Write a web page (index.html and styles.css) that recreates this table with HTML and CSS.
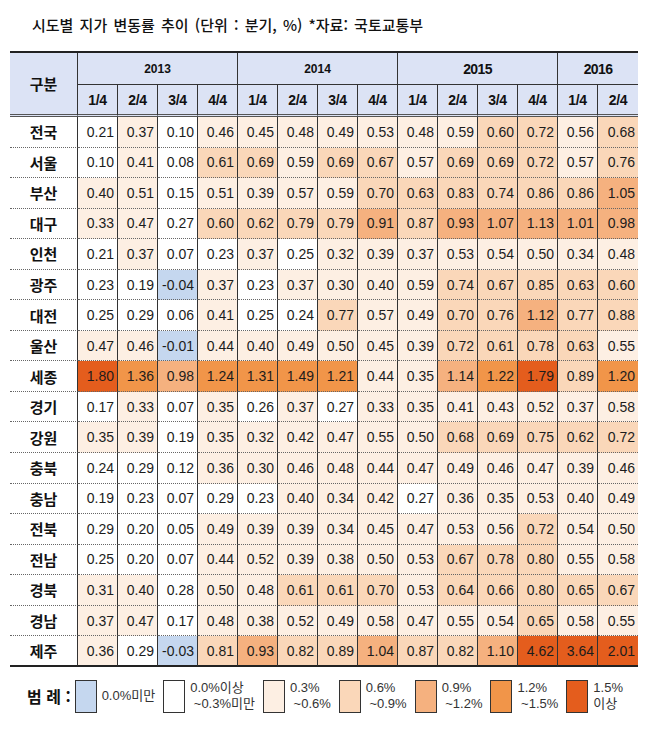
FILE: index.html
```html
<!DOCTYPE html>
<html lang="ko">
<head>
<meta charset="utf-8">
<title>시도별 지가 변동률 추이</title>
<link rel="stylesheet" href="styles.css">
</head>
<body>
<div class="page">
  <div class="title-bar">
    <h1 class="title">시도별 지가 변동률 추이 (단위 : 분기, %) *자료: 국토교통부</h1>
  </div>
  <table class="grid">
    <colgroup><col class="col-name"><col span="14" class="col-q"></colgroup>
    <thead>
      <tr class="yr-row">
        <th rowspan="2" class="hd-name">구분</th>
        <th colspan="4" class="yr yr-s">2013</th>
        <th colspan="4" class="yr yr-s">2014</th>
        <th colspan="4" class="yr yr-l">2015</th>
        <th colspan="2" class="yr yr-l">2016</th>
      </tr>
      <tr class="q-row">
        <th>1/4</th><th>2/4</th><th>3/4</th><th>4/4</th>
        <th>1/4</th><th>2/4</th><th>3/4</th><th>4/4</th>
        <th>1/4</th><th>2/4</th><th>3/4</th><th>4/4</th>
        <th>1/4</th><th>2/4</th>
      </tr>
    </thead>
    <tbody>
      <tr><th class="rn">전국</th><td>0.21</td><td class="a">0.37</td><td>0.10</td><td class="a">0.46</td><td class="a">0.45</td><td class="a">0.48</td><td class="a">0.49</td><td class="a">0.53</td><td class="a">0.48</td><td class="a">0.59</td><td class="b">0.60</td><td class="b">0.72</td><td class="a">0.56</td><td class="b">0.68</td></tr>
      <tr><th class="rn">서울</th><td>0.10</td><td class="a">0.41</td><td>0.08</td><td class="b">0.61</td><td class="b">0.69</td><td class="a">0.59</td><td class="b">0.69</td><td class="b">0.67</td><td class="a">0.57</td><td class="b">0.69</td><td class="b">0.69</td><td class="b">0.72</td><td class="a">0.57</td><td class="b">0.76</td></tr>
      <tr><th class="rn">부산</th><td class="a">0.40</td><td class="a">0.51</td><td>0.15</td><td class="a">0.51</td><td class="a">0.39</td><td class="a">0.57</td><td class="a">0.59</td><td class="b">0.70</td><td class="b">0.63</td><td class="b">0.83</td><td class="b">0.74</td><td class="b">0.86</td><td class="b">0.86</td><td class="c">1.05</td></tr>
      <tr><th class="rn">대구</th><td class="a">0.33</td><td class="a">0.47</td><td>0.27</td><td class="b">0.60</td><td class="b">0.62</td><td class="b">0.79</td><td class="b">0.79</td><td class="c">0.91</td><td class="b">0.87</td><td class="c">0.93</td><td class="c">1.07</td><td class="c">1.13</td><td class="c">1.01</td><td class="c">0.98</td></tr>
      <tr><th class="rn">인천</th><td>0.21</td><td class="a">0.37</td><td>0.07</td><td>0.23</td><td class="a">0.37</td><td>0.25</td><td class="a">0.32</td><td class="a">0.39</td><td class="a">0.37</td><td class="a">0.53</td><td class="a">0.54</td><td class="a">0.50</td><td class="a">0.34</td><td class="a">0.48</td></tr>
      <tr><th class="rn">광주</th><td>0.23</td><td>0.19</td><td class="n">-0.04</td><td class="a">0.37</td><td>0.23</td><td class="a">0.37</td><td class="a">0.30</td><td class="a">0.40</td><td class="a">0.59</td><td class="b">0.74</td><td class="b">0.67</td><td class="b">0.85</td><td class="b">0.63</td><td class="b">0.60</td></tr>
      <tr><th class="rn">대전</th><td>0.25</td><td>0.29</td><td>0.06</td><td class="a">0.41</td><td>0.25</td><td>0.24</td><td class="b">0.77</td><td class="a">0.57</td><td class="a">0.49</td><td class="b">0.70</td><td class="b">0.76</td><td class="c">1.12</td><td class="b">0.77</td><td class="b">0.88</td></tr>
      <tr><th class="rn">울산</th><td class="a">0.47</td><td class="a">0.46</td><td class="n">-0.01</td><td class="a">0.44</td><td class="a">0.40</td><td class="a">0.49</td><td class="a">0.50</td><td class="a">0.45</td><td class="a">0.39</td><td class="b">0.72</td><td class="b">0.61</td><td class="b">0.78</td><td class="b">0.63</td><td class="a">0.55</td></tr>
      <tr><th class="rn">세종</th><td class="e">1.80</td><td class="d">1.36</td><td class="c">0.98</td><td class="d">1.24</td><td class="d">1.31</td><td class="d">1.49</td><td class="d">1.21</td><td class="a">0.44</td><td class="a">0.35</td><td class="c">1.14</td><td class="d">1.22</td><td class="e">1.79</td><td class="b">0.89</td><td class="d">1.20</td></tr>
      <tr><th class="rn">경기</th><td>0.17</td><td class="a">0.33</td><td>0.07</td><td class="a">0.35</td><td>0.26</td><td class="a">0.37</td><td>0.27</td><td class="a">0.33</td><td class="a">0.35</td><td class="a">0.41</td><td class="a">0.43</td><td class="a">0.52</td><td class="a">0.37</td><td class="a">0.58</td></tr>
      <tr><th class="rn">강원</th><td class="a">0.35</td><td class="a">0.39</td><td>0.19</td><td class="a">0.35</td><td class="a">0.32</td><td class="a">0.42</td><td class="a">0.47</td><td class="a">0.55</td><td class="a">0.50</td><td class="b">0.68</td><td class="b">0.69</td><td class="b">0.75</td><td class="b">0.62</td><td class="b">0.72</td></tr>
      <tr><th class="rn">충북</th><td>0.24</td><td>0.29</td><td>0.12</td><td class="a">0.36</td><td class="a">0.30</td><td class="a">0.46</td><td class="a">0.48</td><td class="a">0.44</td><td class="a">0.47</td><td class="a">0.49</td><td class="a">0.46</td><td class="a">0.47</td><td class="a">0.39</td><td class="a">0.46</td></tr>
      <tr><th class="rn">충남</th><td>0.19</td><td>0.23</td><td>0.07</td><td>0.29</td><td>0.23</td><td class="a">0.40</td><td class="a">0.34</td><td class="a">0.42</td><td>0.27</td><td class="a">0.36</td><td class="a">0.35</td><td class="a">0.53</td><td class="a">0.40</td><td class="a">0.49</td></tr>
      <tr><th class="rn">전북</th><td>0.29</td><td>0.20</td><td>0.05</td><td class="a">0.49</td><td class="a">0.39</td><td class="a">0.39</td><td class="a">0.34</td><td class="a">0.45</td><td class="a">0.47</td><td class="a">0.53</td><td class="a">0.56</td><td class="b">0.72</td><td class="a">0.54</td><td class="a">0.50</td></tr>
      <tr><th class="rn">전남</th><td>0.25</td><td>0.20</td><td>0.07</td><td class="a">0.44</td><td class="a">0.52</td><td class="a">0.39</td><td class="a">0.38</td><td class="a">0.50</td><td class="a">0.53</td><td class="b">0.67</td><td class="b">0.78</td><td class="b">0.80</td><td class="a">0.55</td><td class="a">0.58</td></tr>
      <tr><th class="rn">경북</th><td class="a">0.31</td><td class="a">0.40</td><td>0.28</td><td class="a">0.50</td><td class="a">0.48</td><td class="b">0.61</td><td class="b">0.61</td><td class="b">0.70</td><td class="a">0.53</td><td class="b">0.64</td><td class="b">0.66</td><td class="b">0.80</td><td class="b">0.65</td><td class="b">0.67</td></tr>
      <tr><th class="rn">경남</th><td class="a">0.37</td><td class="a">0.47</td><td>0.17</td><td class="a">0.48</td><td class="a">0.38</td><td class="a">0.52</td><td class="a">0.49</td><td class="a">0.58</td><td class="a">0.47</td><td class="a">0.55</td><td class="a">0.54</td><td class="b">0.65</td><td class="a">0.58</td><td class="a">0.55</td></tr>
      <tr><th class="rn">제주</th><td class="a">0.36</td><td>0.29</td><td class="n">-0.03</td><td class="b">0.81</td><td class="c">0.93</td><td class="b">0.82</td><td class="b">0.89</td><td class="c">1.04</td><td class="b">0.87</td><td class="b">0.82</td><td class="c">1.10</td><td class="e">4.62</td><td class="e">3.64</td><td class="e">2.01</td></tr>
    </tbody>
  </table>
  <div class="legend">
    <span class="lg-label">범 례 :</span>
    <div class="lg-item"><span class="sw n"></span><span class="lg-text">0.0%미만</span></div>
    <div class="lg-item"><span class="sw"></span><span class="lg-text">0.0%이상<br>&nbsp;~0.3%미만</span></div>
    <div class="lg-item"><span class="sw a"></span><span class="lg-text">0.3%<br>&nbsp;~0.6%</span></div>
    <div class="lg-item"><span class="sw b"></span><span class="lg-text">0.6%<br>&nbsp;~0.9%</span></div>
    <div class="lg-item"><span class="sw c"></span><span class="lg-text">0.9%<br>&nbsp;~1.2%</span></div>
    <div class="lg-item"><span class="sw d"></span><span class="lg-text">1.2%<br>&nbsp;~1.5%</span></div>
    <div class="lg-item"><span class="sw e"></span><span class="lg-text">1.5%<br>이상</span></div>
  </div>
</div>
</body>
</html>
```
FILE: styles.css
```css
body {
  margin: 0;
  background: #fff;
  font-family: "Noto Sans CJK KR", "Liberation Sans", sans-serif;
  color: #1c1c1c;
}
.page {
  padding: 13px 0 0 10px;
}
.title-bar {
  display: flex;
  padding-left: 22px;
  margin-bottom: 14px;
}
.title {
  margin: 0;
  font-size: 15px;
  font-weight: 500;
  line-height: 24px;
  color: #111;
  word-spacing: 2px;
}
.grid {
  border-collapse: separate;
  border-spacing: 0;
  table-layout: fixed;
  width: 628px;
  border-top: 2px solid #222;
}
.col-name { width: 68px; }
.col-q { width: 40px; }
.grid th,
.grid td {
  box-sizing: border-box;
  padding: 0;
  border-right: 1px solid #333;
}
.grid tr > :last-child { border-right: none; }
.grid thead th {
  background: #dce3f5;
  color: #111;
  font-weight: 700;
  text-align: center;
}
.hd-name {
  font-size: 15px;
  border-bottom: 3px double #555;
}
.grid .hd-name { border-right: 1px solid #333; }
.yr-row .yr {
  height: 32px;
  border-bottom: 1px solid #333;
  font-family: "Liberation Sans", sans-serif;
}
.yr-s { font-size: 12px; }
.yr-l { font-size: 14px; letter-spacing: -0.6px; }
.q-row th {
  height: 32px;
  border-bottom: 3px double #555;
  font-family: "Liberation Sans", sans-serif;
  font-size: 14px;
  letter-spacing: -0.3px;
}
.grid tbody td,
.grid tbody th {
  height: 30.55px;
  border-bottom: 1px dotted #666;
}
.grid tbody td {
  text-align: right;
  padding-right: 3px;
  font-family: "Liberation Sans", sans-serif;
  font-size: 14px;
  color: #1c1c1c;
}
.grid tbody th.rn {
  font-size: 15px;
  font-weight: 700;
  text-align: center;
  color: #111;
}
.grid tbody tr:last-child td,
.grid tbody tr:last-child th {
  border-bottom: 2px solid #222;
}
.n { background: #c5d7ef; }
.a { background: #fdefe3; }
.b { background: #fad7b9; }
.c { background: #f5b17f; }
.d { background: #f19549; }
.e { background: #e45d1d; }

.legend {
  display: flex;
  align-items: center;
  gap: 8px;
  margin-top: 13px;
  padding-left: 17px;
}
.lg-label {
  font-size: 16px;
  font-weight: 700;
  color: #111;
  margin-right: -4px;
}
.lg-item {
  display: flex;
  align-items: center;
  gap: 5px;
}
.sw {
  box-sizing: border-box;
  width: 22px;
  height: 33px;
  border: 1px solid #333;
  background: #fff;
}
.sw.n { background: #c5d7ef; }
.sw.a { background: #fdefe3; }
.sw.b { background: #fad7b9; }
.sw.c { background: #f5b17f; }
.sw.d { background: #f19549; }
.sw.e { background: #e45d1d; }
.lg-text {
  font-family: "Liberation Sans", "Noto Sans CJK KR", sans-serif;
  font-size: 13px;
  line-height: 16px;
  color: #333;
}
```
